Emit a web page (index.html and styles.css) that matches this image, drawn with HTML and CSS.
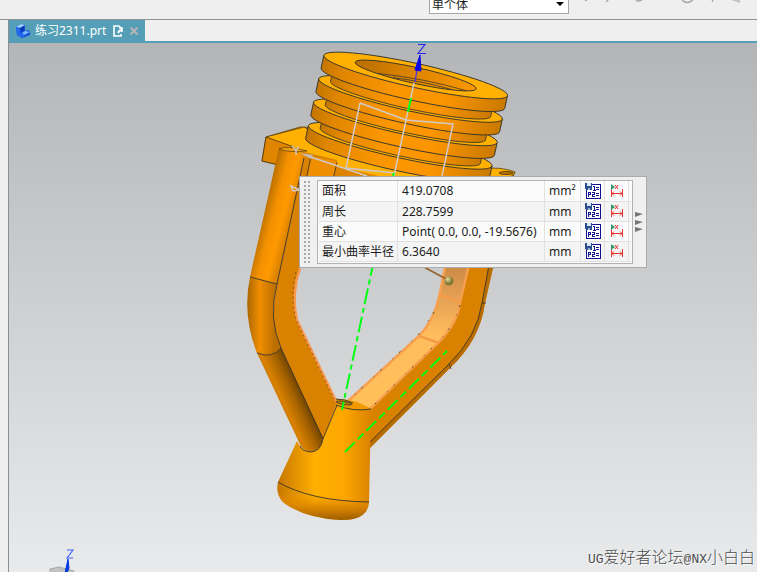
FILE: index.html
```
<!DOCTYPE html>
<html lang="zh-CN">
<head>
<meta charset="utf-8">
<title>练习2311.prt</title>
<link rel="stylesheet" href="styles.css">
</head>
<body>
<header class="toolbar">
  <div class="scope">
    <select class="scope-select" aria-label="选择范围"><option>单个体</option></select>
    <svg class="scope-arrow" width="8" height="4" viewBox="0 0 8 4" aria-hidden="true"><path d="M0 0H8L4 4Z"/></svg>
  </div>
  <svg class="tools" width="188" height="6" viewBox="0 0 188 6" aria-hidden="true" fill="none" stroke="#a3a3a3" stroke-width="1.3">
    <path d="M16 1l2-1M37 2l3-3M67 0q2 2 6 0M113 0q5 5 11 0M143.500 -1v3"/><path d="M162 0l9 3v-4z" fill="#c4c4c4" stroke="none"/>
  </svg>
</header>
<main class="workspace">
  <nav class="tabs">
    <div class="tab">
      <svg width="16" height="16" viewBox="0 0 16 16" aria-hidden="true">
        <path d="M1 4L6 1L10 2V8L13 7L15 9V12L7 15L2 12Z" fill="#1450d8"/>
        <path d="M1 4L6 1L10 2L5 5Z" fill="#9fd0ff"/><path d="M7 10L10 8L15 9L9 12Z" fill="#79b9ff"/>
        <path d="M1 4L5 5V10L9 12V15L2 12Z" fill="#2368f0"/><path d="M5 5L9 3V7L6 9Z" fill="#073bb5"/>
      </svg>
      <a class="tab-name" href="#part">练习2311.prt</a>
      <svg width="12" height="12" viewBox="0 0 12 12" aria-hidden="true" fill="none" stroke="#fff" stroke-width="1.6">
        <path d="M8 11H2V1H7L9 3M3 11H9V9"/><path d="M6 7L8 5M7 3H10V7M10 4L6 8"/>
      </svg>
      <button class="tab-close" aria-label="关闭"><svg width="8" height="8" viewBox="0 0 8 8"><path d="M0.500 0.500L7.500 7.500M7.500 0.500L0.500 7.500" stroke="#bab5b1" stroke-width="2"/></svg></button>
    </div>
  </nav>
  <section class="viewport" id="part">
    <svg class="model" width="748" height="529" viewBox="9 43 748 529" role="img" aria-label="零件模型">
      <defs>
        <linearGradient id="wall"><stop offset="0" stop-color="#c47600"/><stop offset=".12" stop-color="#e08600"/><stop offset=".4" stop-color="#fb9600"/><stop offset=".68" stop-color="#fb9500"/><stop offset=".9" stop-color="#d98200"/><stop offset="1" stop-color="#c97900"/></linearGradient>
        <linearGradient id="bore"><stop offset="0" stop-color="#b96e00"/><stop offset=".4" stop-color="#d98200"/><stop offset="1" stop-color="#fa9800"/></linearGradient>
        <linearGradient id="rod" gradientUnits="userSpaceOnUse" x1="262" y1="215" x2="293" y2="223"><stop offset="0" stop-color="#b96e00"/><stop offset=".35" stop-color="#f49100"/><stop offset=".65" stop-color="#ff9900"/><stop offset="1" stop-color="#d07c00"/></linearGradient>
        <linearGradient id="elbow" gradientUnits="userSpaceOnUse" x1="247" y1="310" x2="275" y2="310"><stop offset="0" stop-color="#a96500"/><stop offset=".45" stop-color="#f08e00"/><stop offset="1" stop-color="#bb6f00"/></linearGradient>
        <linearGradient id="leg" gradientUnits="userSpaceOnUse" x1="274" y1="404" x2="302" y2="391"><stop offset="0" stop-color="#b36a00"/><stop offset=".3" stop-color="#d98100"/><stop offset=".7" stop-color="#a36100"/><stop offset="1" stop-color="#6d4100"/></linearGradient>
        <linearGradient id="legend"><stop offset="0" stop-color="#c67600"/><stop offset=".4" stop-color="#ffb000"/><stop offset=".72" stop-color="#fda600"/><stop offset="1" stop-color="#d98200"/></linearGradient>
        <linearGradient id="foot" x2="0" y2="1"><stop offset=".3" stop-color="#f59400" stop-opacity="0"/><stop offset=".65" stop-color="#d58000" stop-opacity=".8"/><stop offset="1" stop-color="#9b5d00"/></linearGradient>
        <linearGradient id="inside" x2="0" y2="1"><stop offset="0" stop-color="#c68543"/><stop offset=".25" stop-color="#e4a054"/><stop offset=".5" stop-color="#ffbd5c"/><stop offset="1" stop-color="#ffc05a"/></linearGradient>
        <radialGradient id="ball" cx=".35" cy=".3"><stop offset="0" stop-color="#e8dd9d"/><stop offset="1" stop-color="#817833"/></radialGradient>
        <g id="ring" stroke="#39352b" stroke-width=".9">
          <path d="M-94 0V13A94 12 0 0 0 94 13V0Z" fill="url(#wall)"/>
          <ellipse rx="94" ry="12" fill="#ffb000"/>
        </g>
        <g id="neck">
          <path d="M-82 10V24A82 10 0 0 0 82 24V10Z" fill="url(#wall)" stroke="#39352b" stroke-width=".8"/>
        </g>
      </defs>

      <g stroke-linejoin="round">
        <!-- mounting flange -->
        <path d="M266 137L300 127L330 128L470 168L515 172L512 179L485 280H455L440 210H300L275 164L262 161Z" fill="#db8300" stroke="#5d430c" stroke-width=".7"/>
        <path d="M266 137L304 127L325 140L480 169Q500 166 515 172L512 176L490 180H350L300 154L294 151Z" fill="#ffb000" stroke="#55400f" stroke-width=".8"/>
        <path d="M266 137L294 147L283 152L279 165L262 161Z" fill="#df8500" stroke="#49340b" stroke-width=".8"/>
        <path d="M310 157Q350 171 398 180H308Z" fill="#dc8400"/>
        <ellipse cx="506" cy="173" rx="7" ry="1.5" fill="#b96f00" stroke="#49340b" stroke-width=".8"/>
        <!-- left arm -->
        <path d="M300 151L337 160L300 268Q291 294 297 320L337 403L323 440L281 348Q268 325 277 284L304 160Z" fill="#d98100"/>
        <path d="M300 268Q291 294 297 320L337 403" fill="none" stroke="#f8984b" stroke-width="2.4"/>
        <path d="M296 272Q290 296 296 320L334 399" fill="none" stroke="#6d4625" stroke-width=".8" stroke-dasharray="2 3"/>
        <path d="M279 148L250 277L277 284L306 155Z" fill="url(#rod)"/>
        <path d="M250 277Q242 315 257 353Q272 359 281 348Q268 318 277 284Z" fill="url(#elbow)"/>
        <path d="M257 353Q272 359 281 348L323 438Q322 451 310 452Q302 451 298 440Z" fill="url(#leg)"/>
        <path d="M250 277L277 284M304 158L277 284Q268 318 281 348L323 439M257 353Q272 359 281 348" fill="none" stroke="#3b3529" stroke-width=".9"/>
        <path d="M279 149Q286 145 307 151Q290 153 279 149Z" fill="#f39c10" stroke="#51400f" stroke-width=".7"/>
        <path d="M312 157L337 161L332 180H307Z" fill="#ee8e00"/>
        <path d="M311 156L306 180M337 162L333 180" stroke="#40351b" stroke-width=".8"/>
        <!-- right arm -->
        <path d="M472 260H495L485 303Q480 340 450 368L370 448V409L438 343Q458 320 460 303Z" fill="#d98100"/>
        <path d="M493 267L485 303Q480 340 450 368L370 448V442L448 365Q477 337 482 303L490 260Z" fill="#b76c00"/>
        <path d="M489 265L482 303Q477 337 448 365L370 442M482 303H486M449 364L451 369" fill="none" stroke="#3b3529" stroke-width=".9"/>
        <path d="M445 260V268L439 297Q434 320 419 336L347 402L370 409L438 343Q457 324 460 303L470 260Z" fill="url(#inside)" stroke="#f6a04f" stroke-width="2.4"/>
        <path d="M440 295L460 302M419 336L439 343" stroke="#f59c49" stroke-width="2.4"/>
        <path d="M434 312L421 332L352 397M460 305Q455 325 437 343L374 405" fill="none" stroke="#654423" stroke-width="1" stroke-dasharray="2 8 1 15"/>
        <!-- cone and foot -->
        <path d="M337 403L323 439Q320 452 310 452Q302 451 297 441L278 482Q275 495 284 503Q305 518 340 520Q366 521 369 503L371 409Z" fill="url(#legend)"/>
        <path d="M278 482Q302 498 369 502Q368 521 340 520Q305 518 284 503Q275 495 278 482Z" fill="url(#foot)"/>
        <path d="M278 482Q310 501 369 502" fill="none" stroke="#39352b" stroke-width=".9"/>
        <path d="M336 399Q354 398 371 409Q353 412 336 404Z" fill="#f09a00"/>
        <path d="M336 399Q345 399 353 403M336 405Q353 412 371 409M337 405L323 439Q321 452 310 452Q302 451 300 446" fill="none" stroke="#39352b" stroke-width=".9"/>
        <ellipse cx="344" cy="403" rx="8" ry="1.6" transform="rotate(9 344 403)" fill="#b97a12" stroke="#39352b" stroke-width=".8"/>
      </g>

      <!-- threaded collar -->
      <g transform="translate(415.7 75.5) rotate(12.4)">
        <use href="#ring" y="72"/>
        <use href="#neck" y="48"/><use href="#ring" y="48"/>
        <use href="#neck" y="24"/><use href="#ring" y="24"/>
        <use href="#neck"/><use href="#ring"/>
        <ellipse rx="62" ry="8" fill="url(#bore)" stroke="#39352b" stroke-width=".9"/>
        <path d="M-37 6Q10 1 53 4M-22 7Q10 4 38 6" fill="none" stroke="#39352b" stroke-width=".7"/>
      </g>

      <!-- sketch curves and axes -->
      <g fill="none" stroke="#d2cac8" stroke-width="1.5">
        <path d="M360 103L406 120L453 124L442 176M360 103L346 168L395 173M414 83L394 176M308 156L367 176"/>
        <path d="M292 146L296 150L299 147M296 150V155M291 186L300 190L293 191Z"/>
      </g>
      <path d="M300 153L313 155L311 159Z" fill="#c6bdb7"/>
      <g fill="none" stroke="#00ff13" stroke-width="2">
        <path d="M411 98L408 112M394 173L393 176"/>
        <path d="M374 260L342 410" stroke-dasharray="16 4 5 4"/>
        <path d="M345 452L447 351" stroke-dasharray="14 4 8 4"/>
      </g>
      <path d="M415 82L417 70" stroke="#4b32e8" stroke-width="1.3"/>
      <path d="M420 55L421 71L415 70Z" fill="#0808e8" stroke="#0808e8"/>
      <path d="M418 44.500H425L418 53.500H426" fill="none" stroke="#2222f5" stroke-width="1.1"/>
      <path d="M422 266L448 280" stroke="#95602e" stroke-width="1.5"/><circle cx="449" cy="281" r="4.500" fill="url(#ball)"/>

      <!-- orientation triad -->
      <path d="M50 569L59 567L74 571V573H50Z" fill="#c2c2c2" stroke="#a7a7a7"/>
      <path d="M68 559L69 568L67 573H65Z" fill="#003be5" stroke="#003be5"/>
      <path d="M67 550H73L67 558H73" fill="none" stroke="#4261ff" stroke-width="1.1"/>
    </svg>

    <div class="measure">
      <div class="grip"></div>
      <div class="sheet">
        <table>
          <tbody>
            <tr><th scope="row">面积</th><td class="value">419.0708</td><td class="unit">mm²</td><td class="act"><button aria-label="保存"><svg width="16" height="16"><use href="#save"/></svg></button></td><td class="act"><button aria-label="标注"><svg width="14" height="14"><use href="#dimension"/></svg></button></td><td></td></tr>
            <tr><th scope="row">周长</th><td class="value">228.7599</td><td class="unit">mm</td><td class="act"><button aria-label="保存"><svg width="16" height="16"><use href="#save"/></svg></button></td><td class="act"><button aria-label="标注"><svg width="14" height="14"><use href="#dimension"/></svg></button></td><td></td></tr>
            <tr><th scope="row">重心</th><td class="value">Point( 0.0, 0.0, -19.5676)</td><td class="unit">mm</td><td class="act"><button aria-label="保存"><svg width="16" height="16"><use href="#save"/></svg></button></td><td class="act"><button aria-label="标注"><svg width="14" height="14"><use href="#dimension"/></svg></button></td><td></td></tr>
            <tr><th scope="row">最小曲率半径</th><td class="value">6.3640</td><td class="unit">mm</td><td class="act"><button aria-label="保存"><svg width="16" height="16"><use href="#save"/></svg></button></td><td class="act"><button aria-label="标注"><svg width="14" height="14"><use href="#dimension"/></svg></button></td><td></td></tr>
          </tbody>
        </table>
      </div>
      <svg class="more" width="8" height="20" viewBox="0 0 8 20" aria-hidden="true"><path d="M0 0L8 2L0 5ZM0 8L8 10L0 13ZM0 15L8 17L0 20Z" fill="#777"/></svg>
    </div>
    <p class="credit"><span>UG</span>爱好者论坛<span>@NX</span>小白白</p>
  </section>
</main>
<svg class="symbols" width="0" height="0" aria-hidden="true">
  <symbol id="save" viewBox="0 0 16 16">
    <g shape-rendering="crispEdges">
      <path d="M1 1H16V16H1Z" fill="#111191"/><path d="M2 2H15V15H2Z" fill="#fff"/>
      <path d="M0 0H7V7H1V6H0Z" fill="#2c4f91"/><path d="M2 0H6V3H2Z" fill="#dce9f7"/><path d="M3 5H5V7H3Z" fill="#9db7d6"/>
      <path d="M8 3H10V8H9V4H8ZM8 7H11V8H8ZM11 4H14V5H11ZM11 6H14V7H11ZM3 9H6V10H3ZM3 9H4V14H3ZM5 9H6V12H3V11H5ZM7 9H10V12H8V13H10V14H7V11H9V10H7ZM11 10H14V11H11ZM11 12H14V13H11Z" fill="#111191"/>
    </g>
  </symbol>
  <symbol id="dimension" viewBox="0 0 14 14">
    <path d="M1.500 5V13M12.500 5V13M2 9.500H12M4 7.500L2 9.500L4 11.500M10 7.500L12 9.500L10 11.500M5 1L8 5M8 1L5 5" fill="none" stroke="#e3342f" stroke-width="1"/>
    <path d="M1 0L5 3L1 6Z" fill="#2c9a68"/>
  </symbol>
</svg>
</body>
</html>
```
FILE: styles.css
```
* { box-sizing: border-box; }
body {
  margin: 0;
  height: 100vh;
  overflow: hidden;
  display: flex;
  flex-direction: column;
  background: #efefef;
  color: #1c1c1c;
  font: 12px/20px "Noto Sans", "Noto Sans CJK SC", sans-serif;
}
button { padding: 0; border: 0; background: none; display: block; }
svg { display: block; }
.symbols { position: absolute; }

.toolbar {
  flex: none;
  height: 20px;
  overflow: hidden;
  display: flex;
  justify-content: flex-end;
  align-items: flex-end;
  padding-bottom: 5px;
  border-bottom: 1px solid #8d9090;
}
.scope { flex: none; display: grid; align-items: center; width: 140px; }
.scope-select {
  grid-area: 1 / 1;
  width: 100%;
  height: 20px;
  padding: 0 2px;
  appearance: none;
  border: 1px solid #a6a6a6;
  border-radius: 0;
  background: #fff;
  color: #1c1c1c;
  font: inherit;
}
.scope-arrow { grid-area: 1 / 1; justify-self: end; margin-right: 5px; }
.tools { align-self: flex-start; flex: none; }

.workspace {
  flex: 1;
  min-height: 0;
  margin-left: 8px;
  display: flex;
  flex-direction: column;
  border-left: 1px solid #8b8f91;
}
.tabs { flex: none; display: flex; border-bottom: 2px solid #549fb7; }
.tab { display: flex; align-items: center; height: 21px; padding: 0 7px 0 6px; background: #549fb7; color: #fff; }
.tab-name { margin: 0 6px 0 4px; color: #fff; text-decoration: none; }
.tab-close { margin-left: 6px; }

.viewport {
  flex: 1;
  min-height: 0;
  position: relative;
  overflow: hidden;
  background: linear-gradient(#b4b5b7, #e8eaeb);
}

.measure {
  position: absolute;
  left: 290px;
  top: 133px;
  display: flex;
  align-items: center;
  gap: 2px;
  padding: 3px;
  border: 1px solid #a9abad;
  background: #f0f0f0;
}
.grip { align-self: stretch; width: 7px; margin-right: 5px; background: radial-gradient(circle, #a8a8a8 1px, transparent 1px) 0 0 / 4px 4px; }
.sheet { padding: 0 1px 1px; border: 1px solid #b2b2b2; background: #fafafa; }
table { border-collapse: collapse; }
tr { height: 20px; background: #fbfbfb; }
tr:nth-child(even) { background: #f4f4f4; }
th, td { padding: 0 3px; border-right: 1px solid #e1e1e1; border-bottom: 1px solid #e1e1e1; font-weight: 400; text-align: left; white-space: nowrap; line-height: 19px; }
th { width: 78px; }
.value { width: 147px; padding: 0 4px; }
.unit { width: 36px; padding-left: 4px; }
.act { width: 24px; padding: 0 2px; }
.act button { margin: 0 auto; }
td:last-child { padding: 0 1px; border-right: 0; }

.credit { position: absolute; right: 2px; bottom: 2px; margin: 0; color: #4c4c4c; font: 300 16px/20px "Noto Sans CJK SC", sans-serif; text-shadow: 1px 1px #fff; }
.credit span { font-family: "Liberation Mono", monospace; font-size: 13px; }
```
